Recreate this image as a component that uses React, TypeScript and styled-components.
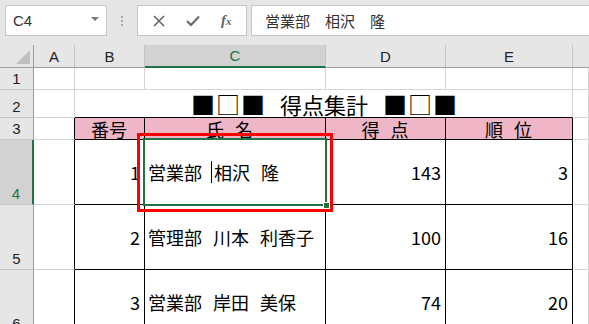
import React from 'react';
import styled, { createGlobalStyle } from 'styled-components';

const GlobalStyle = createGlobalStyle`
  html, body {
    margin: 0;
    padding: 0;
    background: #e6e6e6;
    overflow: hidden;
  }
`;

const green = '#217346';
const gridLine = '#d4d4d4';
const jpFont = `"Noto Sans CJK JP", "Liberation Sans", sans-serif`;

const Page = styled.div`
  width: 589px;
  height: 324px;
  display: flex;
  flex-direction: column;
  overflow: hidden;
  background: #e6e6e6;
`;

const Toolbar = styled.div`
  height: 45px;
  flex: none;
  display: flex;
  align-items: flex-start;
  padding: 5px 0 0 5px;
  box-sizing: border-box;
`;

const NameBox = styled.div`
  width: 102px;
  height: 31px;
  box-sizing: border-box;
  background: #fff;
  border: 1px solid #c6c6c6;
  display: flex;
  align-items: center;
  justify-content: space-between;
  padding: 0 7px;
  font-family: "Liberation Sans", sans-serif;
  font-size: 15px;
  color: #333;
`;

const DropArrow = styled.span`
  width: 0;
  height: 0;
  border-left: 4px solid transparent;
  border-right: 4px solid transparent;
  border-top: 4px solid #777;
  margin-bottom: 4px;
`;

const Dots = styled.div`
  width: 30px;
  height: 31px;
  display: flex;
  flex-direction: column;
  align-items: center;
  justify-content: center;
  gap: 2px;

  span {
    width: 2px;
    height: 2px;
    background: #a8a8a8;
  }
`;

const ButtonBox = styled.div`
  width: 110px;
  height: 31px;
  box-sizing: border-box;
  background: #fff;
  border: 1px solid #c6c6c6;
  display: flex;
  align-items: center;
  justify-content: space-around;
  padding: 0 4px;
`;

const FxLabel = styled.span`
  font-family: "Liberation Serif", serif;
  font-style: italic;
  font-weight: bold;
  font-size: 15px;
  color: #666;

  small {
    font-size: 11px;
  }
`;

const FormulaBox = styled.div`
  flex: 1;
  height: 31px;
  margin-left: 4px;
  margin-right: -2px;
  box-sizing: border-box;
  background: #fff;
  border: 1px solid #c6c6c6;
  display: flex;
  align-items: center;
  padding-left: 13px;
  font-family: ${jpFont};
  font-size: 15px;
  color: #333;
  white-space: pre;
`;

const Sheet = styled.div`
  flex: 1;
  display: grid;
  grid-template-columns: 34px 41px 70px 181px 120px 127px 1fr;
  grid-template-rows: 23px 22px 28px 22px 65px 65px 65px;
  background: #fff;
  overflow: hidden;
`;

const ColHead = styled.div<{ $active?: boolean; $last?: boolean }>`
  box-sizing: border-box;
  background: ${p => (p.$active ? '#d2d2d2' : '#e6e6e6')};
  border-right: ${p => (p.$last ? 'none' : '1px solid #c4c4c4')};
  border-bottom: ${p => (p.$active ? `2px solid ${green}` : '1px solid #9e9e9e')};
  display: flex;
  align-items: center;
  justify-content: center;
  font-family: "Liberation Sans", sans-serif;
  font-size: 15px;
  color: ${p => (p.$active ? green : '#222')};
`;

const Corner = styled(ColHead)`
  position: relative;
  border-right: 1px solid #9e9e9e;

  &::after {
    content: '';
    position: absolute;
    right: 3px;
    bottom: 3px;
    width: 0;
    height: 0;
    border-left: 14px solid transparent;
    border-bottom: 14px solid #c0c0c0;
  }
`;

const RowHead = styled.div<{ $active?: boolean }>`
  box-sizing: border-box;
  background: ${p => (p.$active ? '#d2d2d2' : '#e6e6e6')};
  border-right: ${p => (p.$active ? `2px solid ${green}` : '1px solid #9e9e9e')};
  border-bottom: 1px solid #c4c4c4;
  display: flex;
  align-items: flex-end;
  justify-content: center;
  padding-bottom: 3px;
  font-family: "Liberation Sans", sans-serif;
  font-size: 15px;
  line-height: 1;
  color: ${p => (p.$active ? green : '#222')};
`;

const Cell = styled.div<{
  $right?: string;
  $bottom?: string;
  $bg?: string;
  $justify?: string;
  $span?: number;
  $padRight?: number;
}>`
  position: relative;
  box-sizing: border-box;
  grid-column: span ${p => p.$span ?? 1};
  background: ${p => p.$bg ?? '#fff'};
  border-right: 1px solid ${p => p.$right ?? gridLine};
  border-bottom: 1px solid ${p => p.$bottom ?? gridLine};
  display: flex;
  align-items: center;
  justify-content: ${p => p.$justify ?? 'flex-start'};
  padding: 0 ${p => p.$padRight ?? 4}px 0 3px;
  font-family: ${jpFont};
  font-size: 18px;
  line-height: 1;
  color: #000;
  white-space: pre;
  word-spacing: 7px;
`;

const Title = styled.span`
  font-size: 22px;
  word-spacing: 10px;
  margin-left: 2px;
  display: flex;
  align-items: center;
`;

const Squares = styled.span`
  font-size: 24px;
  letter-spacing: 1px;
  word-spacing: 0;
  margin-right: -1px;
`;

const Cursor = styled.span`
  display: inline-block;
  width: 1px;
  height: 22px;
  background: #000;
  vertical-align: middle;
  margin: 0 2px 0 -2px;
`;

const Selection = styled.div`
  position: absolute;
  z-index: 5;
  left: -2px;
  top: -2px;
  right: -2px;
  bottom: -2px;
  border: 2px solid ${green};
  pointer-events: none;
`;

const FillHandle = styled.div`
  position: absolute;
  right: -5px;
  bottom: -5px;
  width: 5px;
  height: 5px;
  background: ${green};
  border: 1px solid #fff;
`;

const Callout = styled.div`
  position: absolute;
  z-index: 6;
  left: -8px;
  top: -7px;
  right: -8px;
  bottom: -8px;
  border: 3px solid #ff0000;
  pointer-events: none;
`;

const rows = [
  { no: 1, name: '営業部 相沢 隆', score: 143, rank: 3 },
  { no: 2, name: '管理部 川本 利香子', score: 100, rank: 16 },
  { no: 3, name: '営業部 岸田 美保', score: 74, rank: 20 },
];

const columns = ['A', 'B', 'C', 'D', 'E', ''];
const pink = '#efb6c7';

const CloseIcon = () => (
  <svg width="12" height="12" viewBox="0 0 12 12">
    <path d="M1 1 L11 11 M11 1 L1 11" stroke="#666" strokeWidth="1.6" fill="none" />
  </svg>
);

const CheckIcon = () => (
  <svg width="14" height="12" viewBox="0 0 14 12">
    <path d="M1 6 L5 10 L13 1.5" stroke="#666" strokeWidth="2" fill="none" />
  </svg>
);

const App: React.FC = () => {
  return (
    <Page>
      <GlobalStyle />
      <Toolbar>
        <NameBox>
          C4
          <DropArrow />
        </NameBox>
        <Dots>
          <span />
          <span />
          <span />
        </Dots>
        <ButtonBox>
          <CloseIcon />
          <CheckIcon />
          <FxLabel>
            f<small>x</small>
          </FxLabel>
        </ButtonBox>
        <FormulaBox>営業部　相沢　隆</FormulaBox>
      </Toolbar>

      <Sheet>
        <Corner />
        {columns.map((c, i) => (
          <ColHead key={i} $active={c === 'C'} $last={i === columns.length - 1}>
            {c}
          </ColHead>
        ))}

        {/* row 1 */}
        <RowHead>1</RowHead>
        <Cell />
        <Cell />
        <Cell />
        <Cell />
        <Cell />
        <Cell />

        {/* row 2: title merged B:E */}
        <RowHead>2</RowHead>
        <Cell />
        <Cell $span={4} $justify="center" $bottom="#000">
          <Title>
            <Squares>■□■</Squares> 得点集計 <Squares>■□■</Squares>
          </Title>
        </Cell>
        <Cell />

        {/* row 3: header */}
        <RowHead>3</RowHead>
        <Cell $right="#000" />
        <Cell $bg={pink} $right="#000" $bottom="#000" $justify="center">番号</Cell>
        <Cell $bg={pink} $right="#000" $bottom="#000" $justify="center" $padRight={14}>氏 名</Cell>
        <Cell $bg={pink} $right="#000" $bottom="#000" $justify="center">得 点</Cell>
        <Cell $bg={pink} $right="#000" $bottom="#000" $justify="center">順 位</Cell>
        <Cell />

        {rows.map((r, i) => {
          const [dept, ...rest] = r.name.split(' ');
          const first = i === 0;
          return (
            <React.Fragment key={r.no}>
              <RowHead $active={first}>{r.no + 3}</RowHead>
              <Cell $right="#000" />
              <Cell $right="#000" $bottom="#000" $justify="flex-end">{r.no}</Cell>
              <Cell $right="#000" $bottom="#000">
                {first ? (
                  <>
                    {dept + ' '}
                    <Cursor />
                    {rest.join(' ')}
                    <Selection>
                      <FillHandle />
                    </Selection>
                    <Callout />
                  </>
                ) : (
                  r.name
                )}
              </Cell>
              <Cell $right="#000" $bottom="#000" $justify="flex-end">{r.score}</Cell>
              <Cell $right="#000" $bottom="#000" $justify="flex-end">{r.rank}</Cell>
              <Cell />
            </React.Fragment>
          );
        })}
      </Sheet>
    </Page>
  );
};

export default App;
